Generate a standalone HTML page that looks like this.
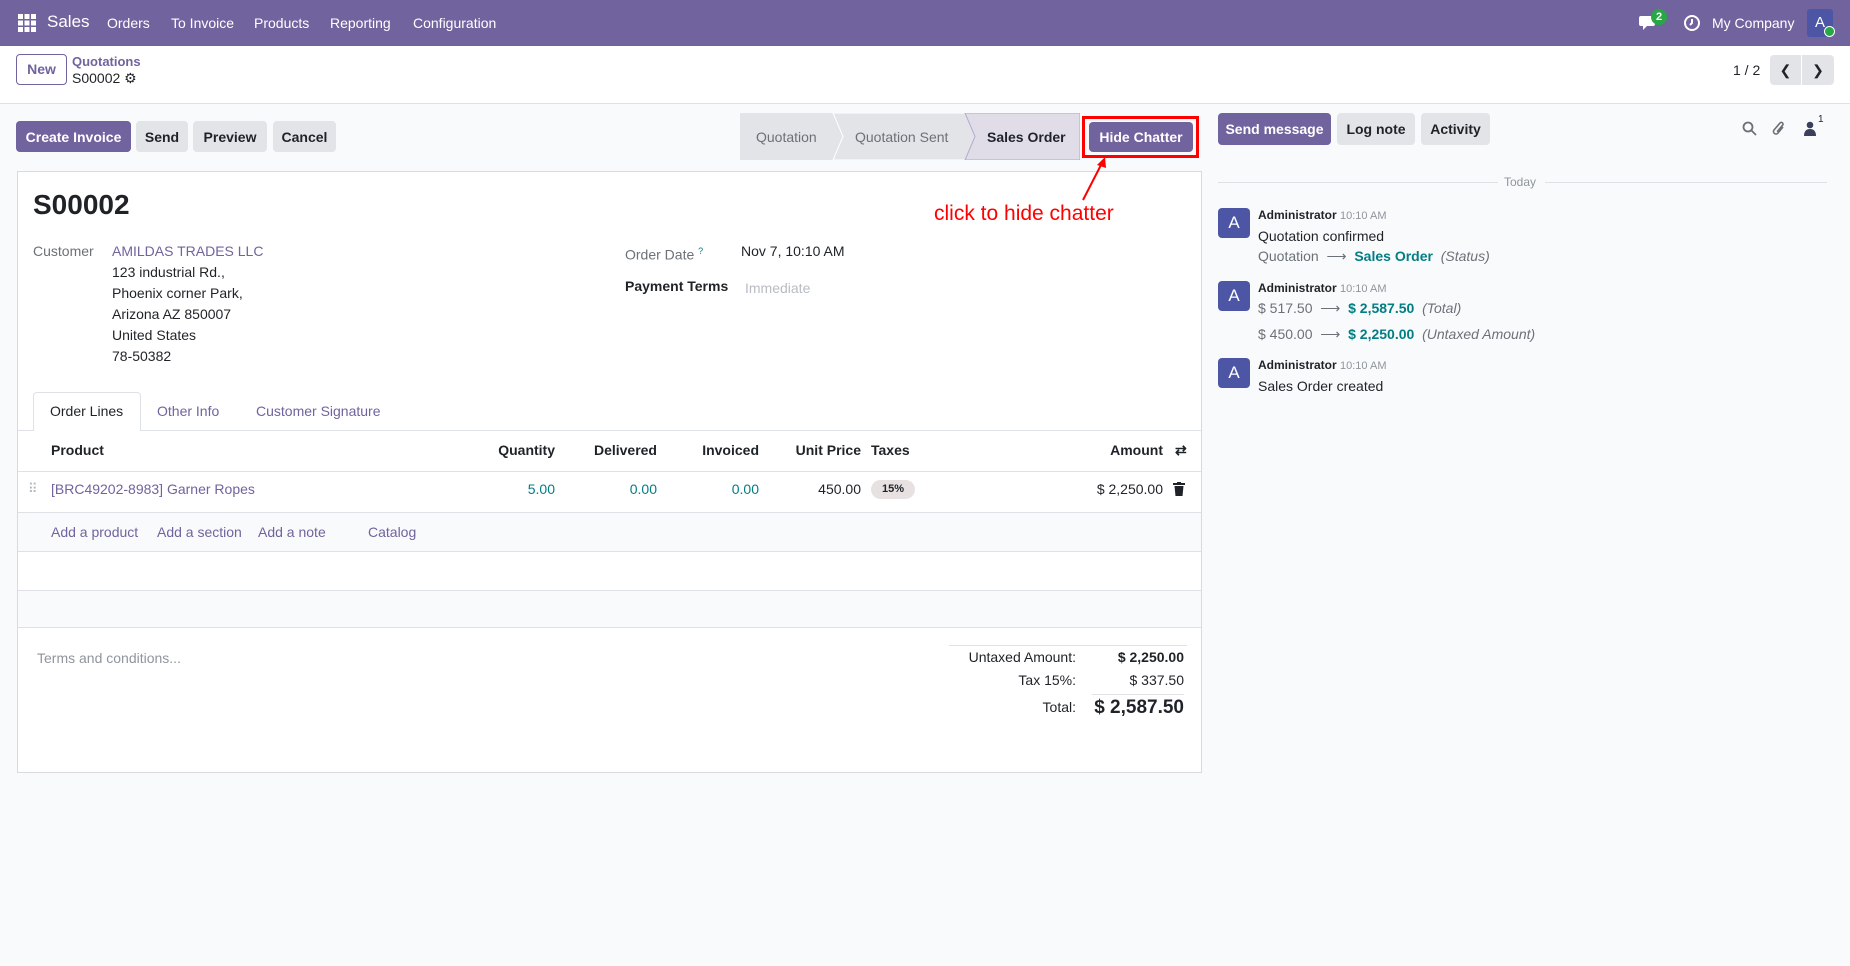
<!DOCTYPE html>
<html><head><meta charset="utf-8"><style>
*{margin:0;padding:0;box-sizing:border-box}
body{width:1850px;height:966px;overflow:hidden;background:#f9fafb;font-family:"Liberation Sans",sans-serif;font-size:14px;color:#1f2328;position:relative}
.a{position:absolute;white-space:nowrap;line-height:20px}
.r{text-align:right}
.btn{position:absolute;border-radius:4px;font-weight:bold;font-size:14px;display:flex;align-items:center;justify-content:center;background:#e2e4e8;color:#1f2328}
.pri{background:#71639e;color:#fff}
.nav{position:absolute;left:0;top:0;width:1850px;height:46px;background:#71639e;color:#fff}
.link{color:#71639e}
.teal{color:#017e84}
.gray{color:#6c7178}
.hl{position:absolute;height:1px;background:#dee2e6}
.av{position:absolute;width:32px;height:30px;background:#4c56a5;color:#fff;border-radius:4px;font-size:17px;display:flex;align-items:center;justify-content:center}
</style></head><body>
<div class="nav">
 <svg class="a" style="left:18px;top:14px" width="18" height="18" viewBox="0 0 18 18" fill="#fff"><rect x="0" y="0" width="5" height="5"/><rect x="6.5" y="0" width="5" height="5"/><rect x="13" y="0" width="5" height="5"/><rect x="0" y="6.5" width="5" height="5"/><rect x="6.5" y="6.5" width="5" height="5"/><rect x="13" y="6.5" width="5" height="5"/><rect x="0" y="13" width="5" height="5"/><rect x="6.5" y="13" width="5" height="5"/><rect x="13" y="13" width="5" height="5"/></svg>
 <div class="a" style="left:47px;top:12px;font-size:17px">Sales</div>
 <div class="a" style="left:107px;top:13px">Orders</div>
 <div class="a" style="left:171px;top:13px">To Invoice</div>
 <div class="a" style="left:254px;top:13px">Products</div>
 <div class="a" style="left:330px;top:13px">Reporting</div>
 <div class="a" style="left:413px;top:13px">Configuration</div>
 <svg class="a" style="left:1639px;top:14px" width="20" height="18" viewBox="0 0 20 18" fill="#fff"><path d="M2 2h12a2 2 0 0 1 2 2v6a2 2 0 0 1-2 2H8l-4 4v-4H2a2 2 0 0 1-2-2V4a2 2 0 0 1 2-2z"/></svg>
 <div class="a" style="left:1651px;top:9px;width:16px;height:16px;border-radius:8px;background:#28a745;font-size:11px;line-height:16px;text-align:center;font-weight:bold">2</div>
 <svg class="a" style="left:1683px;top:14px" width="18" height="18" viewBox="0 0 18 18" fill="none" stroke="#fff" stroke-width="2"><circle cx="9" cy="9" r="7"/><path d="M9 5v4l-2 2"/></svg>
 <div class="a" style="left:1712px;top:13px">My Company</div>
 <div class="a" style="left:1807px;top:9px;width:26px;height:28px;background:#4c56a5;border-radius:3px;text-align:center;line-height:28px;font-size:15px">A</div>
 <div class="a" style="left:1824px;top:26px;width:11px;height:11px;border-radius:6px;background:#28a745;border:1px solid #fff"></div>
</div>
<div style="position:absolute;left:0;top:46px;width:1850px;height:58px;background:#fff;border-bottom:1px solid #dee2e6"></div>
<div class="a" style="left:16px;top:54px;width:51px;height:31px;border:1px solid #71639e;border-radius:4px;color:#71639e;text-align:center;line-height:29px;font-weight:bold">New</div>
<div class="a link" style="left:72px;top:52px;font-size:13px;font-weight:bold">Quotations</div>
<div class="a" style="left:72px;top:68px;font-size:14px">S00002 <span style="font-size:14px">⚙</span></div>
<div class="a" style="left:1733px;top:60px">1 / 2</div>
<div class="btn" style="left:1770px;top:55px;width:31px;height:30px;border-radius:4px 0 0 4px;font-weight:normal">&#10094;</div>
<div class="btn" style="left:1802px;top:55px;width:32px;height:30px;border-radius:0 4px 4px 0;font-weight:normal">&#10095;</div>

<div class="btn pri" style="left:16px;top:121px;width:115px;height:31px">Create Invoice</div>
<div class="btn" style="left:136px;top:121px;width:52px;height:31px">Send</div>
<div class="btn" style="left:193px;top:121px;width:74px;height:31px">Preview</div>
<div class="btn" style="left:273px;top:121px;width:63px;height:31px">Cancel</div>

<svg class="a" style="left:740px;top:113px" width="340" height="47" viewBox="0 0 340 47"><polygon points="0,0 93,0 103,23.5 93,47 0,47" fill="#e2e4e8"/><polygon points="93,0 225,0 235,23.5 225,47 93,47 103,23.5" fill="#e2e4e8" stroke="#fff" stroke-width="1"/><polygon points="225,0 340,0 340,47 225,47 235,23.5" fill="#e0dde9" stroke="#b1a9cc" stroke-width="1"/></svg>
<div class="a gray" style="left:756px;top:127px">Quotation</div>
<div class="a gray" style="left:855px;top:127px">Quotation Sent</div>
<div class="a" style="left:987px;top:127px;font-weight:bold">Sales Order</div>
<div class="a" style="left:1082px;top:116px;width:117px;height:42px;border:3px solid #f00"></div>
<div class="btn pri" style="left:1089px;top:122px;width:104px;height:30px">Hide Chatter</div>

<div style="position:absolute;left:17px;top:171px;width:1185px;height:602px;background:#fff;border:1px solid #d8dadd"></div>
<div class="a" style="left:934px;top:202px;color:#f00;font-size:21px;line-height:24px">click to hide chatter</div>
<svg class="a" style="left:1075px;top:155px" width="40" height="48"><line x1="8" y1="45" x2="27" y2="8" stroke="#f00" stroke-width="2"/><polygon points="30,2 22,10 31,13" fill="#f00"/></svg>
<div class="a" style="left:33px;top:189px;font-size:28px;line-height:32px;font-weight:bold">S00002</div>
<div class="a gray" style="left:33px;top:241px">Customer</div>
<div class="a link" style="left:112px;top:241px">AMILDAS TRADES LLC</div>
<div class="a" style="left:112px;top:262px">123 industrial Rd.,</div>
<div class="a" style="left:112px;top:283px">Phoenix corner Park,</div>
<div class="a" style="left:112px;top:304px">Arizona AZ 850007</div>
<div class="a" style="left:112px;top:325px">United States</div>
<div class="a" style="left:112px;top:346px">78-50382</div>
<div class="a gray" style="left:625px;top:241px">Order Date <sup style="font-size:9px;color:#017e84">?</sup></div>
<div class="a" style="left:741px;top:241px">Nov 7, 10:10 AM</div>
<div class="a" style="left:625px;top:276px;font-weight:bold">Payment Terms</div>
<div class="a" style="left:745px;top:278px;color:#b8bcc2">Immediate</div>

<div class="hl" style="left:18px;top:430px;width:1183px"></div>
<div class="a" style="left:33px;top:392px;width:108px;height:39px;background:#fff;border:1px solid #dee2e6;border-bottom:none;border-radius:4px 4px 0 0"></div>
<div class="a" style="left:50px;top:401px">Order Lines</div>
<div class="a link" style="left:157px;top:401px">Other Info</div>
<div class="a link" style="left:256px;top:401px">Customer Signature</div>

<div class="a" style="left:51px;top:440px;font-weight:bold">Product</div>
<div class="a r" style="left:455px;width:100px;top:440px;font-weight:bold">Quantity</div>
<div class="a r" style="left:557px;width:100px;top:440px;font-weight:bold">Delivered</div>
<div class="a r" style="left:659px;width:100px;top:440px;font-weight:bold">Invoiced</div>
<div class="a r" style="left:761px;width:100px;top:440px;font-weight:bold">Unit Price</div>
<div class="a" style="left:871px;top:440px;font-weight:bold">Taxes</div>
<div class="a r" style="left:1013px;width:150px;top:440px;font-weight:bold">Amount</div>
<div class="a" style="left:1175px;top:440px;font-size:14px;font-weight:bold">⇄</div>
<div class="hl" style="left:18px;top:471px;width:1183px"></div>
<div class="a" style="left:28px;top:479px;color:#adb5bd;font-size:13px">⠿</div>
<div class="a link" style="left:51px;top:479px">[BRC49202-8983] Garner Ropes</div>
<div class="a r teal" style="left:455px;width:100px;top:479px">5.00</div>
<div class="a r teal" style="left:557px;width:100px;top:479px">0.00</div>
<div class="a r teal" style="left:659px;width:100px;top:479px">0.00</div>
<div class="a r" style="left:761px;width:100px;top:479px">450.00</div>
<div class="a" style="left:871px;top:480px;width:44px;height:19px;line-height:19px;border-radius:10px;background:#e7e1e1;font-size:11px;font-weight:bold;text-align:center">15%</div>
<div class="a r" style="left:1013px;width:150px;top:479px">$ 2,250.00</div>
<svg class="a" style="left:1173px;top:482px" width="12" height="14" viewBox="0 0 12 14" fill="#1f2328"><rect x="0" y="1" width="12" height="2"/><rect x="4" y="0" width="4" height="2"/><path d="M1.5 4h9l-1 10h-7z"/></svg>
<div style="position:absolute;left:18px;top:512px;width:1183px;height:40px;background:#f9fafb;border-top:1px solid #dee2e6;border-bottom:1px solid #dee2e6"></div>
<div class="a link" style="left:51px;top:522px">Add a product</div>
<div class="a link" style="left:157px;top:522px">Add a section</div>
<div class="a link" style="left:258px;top:522px">Add a note</div>
<div class="a link" style="left:368px;top:522px">Catalog</div>
<div style="position:absolute;left:18px;top:590px;width:1183px;height:38px;background:#f9fafb;border-top:1px solid #dee2e6;border-bottom:1px solid #dee2e6"></div>
<div class="a" style="left:37px;top:648px;color:#8f959c">Terms and conditions...</div>
<div class="hl" style="left:949px;top:645px;width:238px"></div>
<div class="a r" style="left:900px;width:176px;top:647px">Untaxed Amount:</div>
<div class="a r" style="left:1084px;width:100px;top:647px;font-weight:bold">$ 2,250.00</div>
<div class="a r" style="left:900px;width:176px;top:670px">Tax 15%:</div>
<div class="a r" style="left:1084px;width:100px;top:670px">$ 337.50</div>
<div class="hl" style="left:1092px;top:694px;width:92px"></div>
<div class="a r" style="left:900px;width:176px;top:697px">Total:</div>
<div class="a r" style="left:1034px;width:150px;top:697px;font-weight:bold;font-size:19px;line-height:22px">$ 2,587.50</div>

<div class="btn pri" style="left:1218px;top:113px;width:113px;height:32px">Send message</div>
<div class="btn" style="left:1337px;top:113px;width:78px;height:32px">Log note</div>
<div class="btn" style="left:1421px;top:113px;width:69px;height:32px">Activity</div>
<svg class="a" style="left:1742px;top:121px" width="15" height="15" viewBox="0 0 15 15" fill="none" stroke="#6c7178" stroke-width="1.8"><circle cx="6" cy="6" r="4.5"/><path d="M9.5 9.5L14 14"/></svg>
<svg class="a" style="left:1771px;top:119px" width="16" height="18" viewBox="0 0 16 18" fill="none" stroke="#6c7178" stroke-width="1.6"><path d="M12 8l-5 6a2.5 2.5 0 0 1-4-3l6-7a1.7 1.7 0 0 1 2.6 2.2l-5.5 6.5"/></svg>
<svg class="a" style="left:1804px;top:121px" width="12" height="15" viewBox="0 0 12 15" fill="#3b3f5c"><circle cx="6" cy="4" r="3.3"/><path d="M0 15c0-5 2.5-7 6-7s6 2 6 7z"/></svg>
<div class="a" style="left:1818px;top:114px;font-size:10px;line-height:12px">1</div>
<div class="hl" style="left:1218px;top:182px;width:280px"></div>
<div class="hl" style="left:1545px;top:182px;width:282px"></div>
<div class="a" style="left:1504px;top:172px;font-size:12px;color:#8f959c">Today</div>

<div class="av" style="left:1218px;top:208px">A</div>
<div class="a" style="left:1258px;top:205px;font-size:12px;font-weight:bold">Administrator <span style="font-weight:normal;color:#8f959c;font-size:11px">10:10 AM</span></div>
<div class="a" style="left:1258px;top:226px">Quotation confirmed</div>
<div class="a gray" style="left:1258px;top:246px">Quotation &nbsp;⟶&nbsp; <b class="teal">Sales Order</b> &nbsp;<i>(Status)</i></div>
<div class="av" style="left:1218px;top:281px">A</div>
<div class="a" style="left:1258px;top:278px;font-size:12px;font-weight:bold">Administrator <span style="font-weight:normal;color:#8f959c;font-size:11px">10:10 AM</span></div>
<div class="a gray" style="left:1258px;top:298px">$ 517.50 &nbsp;⟶&nbsp; <b class="teal">$ 2,587.50</b> &nbsp;<i>(Total)</i></div>
<div class="a gray" style="left:1258px;top:324px">$ 450.00 &nbsp;⟶&nbsp; <b class="teal">$ 2,250.00</b> &nbsp;<i>(Untaxed Amount)</i></div>
<div class="av" style="left:1218px;top:358px">A</div>
<div class="a" style="left:1258px;top:355px;font-size:12px;font-weight:bold">Administrator <span style="font-weight:normal;color:#8f959c;font-size:11px">10:10 AM</span></div>
<div class="a" style="left:1258px;top:376px">Sales Order created</div>
</body></html>
